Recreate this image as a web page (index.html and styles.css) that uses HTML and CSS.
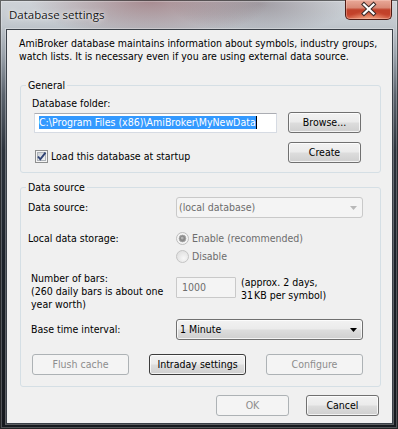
FILE: index.html
```html
<!DOCTYPE html>
<html>
<head>
<meta charset="utf-8">
<title>Database settings</title>
<link rel="stylesheet" href="styles.css">
</head>
<body>
<div class="window">
  <div class="titlebar">
    <span class="title">Database settings</span>
    <div class="close">
      <svg width="47" height="20" viewBox="0 0 47 20">
        <path d="M19 5.5 L28.5 14.5 M28.5 5.5 L19 14.5" stroke="#3a2a28" stroke-width="4.2" stroke-linecap="square" fill="none"/>
        <path d="M19 5.5 L28.5 14.5 M28.5 5.5 L19 14.5" stroke="#ffffff" stroke-width="2.2" stroke-linecap="square" fill="none"/>
      </svg>
    </div>
  </div>
  <div class="client">
    <p class="intro">AmiBroker database maintains information about symbols, industry groups,<br>watch lists. It is necessary even if you are using external data source.</p>

    <fieldset class="group general">
      <legend>General</legend>
      <div class="gen-grid">
        <span class="folder-label">Database folder:</span>
        <div class="edit folder"><span class="sel">C:\Program Files (x86)\AmiBroker\MyNewData</span><span class="caret"></span></div>
        <button class="btn">Browse...</button>
        <label class="check">
          <svg class="box" width="13" height="13" viewBox="0 0 13 13">
            <defs>
              <linearGradient id="cbg" x1="0" y1="0" x2="1" y2="1">
                <stop offset="0" stop-color="#cbcfd5"/>
                <stop offset="1" stop-color="#f6f6f6"/>
              </linearGradient>
            </defs>
            <rect x="0.5" y="0.5" width="12" height="12" fill="#f4f4f4" stroke="#8e8f8f"/>
            <rect x="2.5" y="2.5" width="8" height="8" fill="url(#cbg)" stroke="#aeb3b9" stroke-width="1"/>
            <path d="M3 6.5 L5.3 9.3 L10.5 2.6" stroke="#2f4375" stroke-width="1.9" fill="none"/>
          </svg>
          <span>Load this database at startup</span>
        </label>
        <button class="btn create">Create</button>
      </div>
    </fieldset>

    <fieldset class="group source">
      <legend>Data source</legend>
      <div class="row row1">
        <span class="lbl">Data source:</span>
        <div class="combo disabled">
          <span>(local database)</span>
          <svg width="7" height="4" viewBox="0 0 7 4"><path d="M0 0 H7 L3.5 4 Z" fill="#b8b8b8"/></svg>
        </div>
      </div>
      <div class="row row2">
        <span class="lbl">Local data storage:</span>
        <div class="radios">
          <label class="radio">
            <svg width="13" height="13" viewBox="0 0 13 13">
              <circle cx="6.5" cy="6.5" r="6" fill="#f4f4f4" stroke="#bdbdbd"/>
              <circle cx="6.5" cy="6.5" r="3.4" fill="#8a8a8a" stroke="#a6a6a6" stroke-width="0.8"/>
              <circle cx="6.2" cy="6.1" r="1.4" fill="#b4b4b4"/>
            </svg>
            <span>Enable (recommended)</span>
          </label>
          <label class="radio">
            <svg width="13" height="13" viewBox="0 0 13 13">
              <defs>
                <radialGradient id="rg" cx="0.6" cy="0.65" r="0.7">
                  <stop offset="0" stop-color="#f7f7f7"/>
                  <stop offset="1" stop-color="#dedede"/>
                </radialGradient>
              </defs>
              <circle cx="6.5" cy="6.5" r="6" fill="url(#rg)" stroke="#c4c4c4"/>
            </svg>
            <span>Disable</span>
          </label>
        </div>
      </div>
      <div class="row row3">
        <span class="lbl indent">Number of bars:<br>(260 daily bars is about one<br>year worth)</span>
        <div class="bars">
          <div class="edit num">1000</div>
          <span class="note">(approx. 2 days,<br>31&#8202;KB per symbol)</span>
        </div>
      </div>
      <div class="row row4">
        <span class="lbl indent">Base time interval:</span>
        <div class="combo">
          <span>1 Minute</span>
          <svg width="7" height="4" viewBox="0 0 7 4"><path d="M0 0 H7 L3.5 4 Z" fill="#000"/></svg>
        </div>
      </div>
      <div class="btnrow">
        <button class="btn wide" disabled>Flush cache</button>
        <button class="btn wide focus">Intraday settings</button>
        <button class="btn wide" disabled>Configure</button>
      </div>
    </fieldset>

    <div class="footer">
      <button class="btn" disabled>OK</button>
      <button class="btn">Cancel</button>
    </div>
  </div>
</div>
</body>
</html>
```

FILE: styles.css
```css
* { box-sizing: border-box; }

body {
  margin: 0;
  width: 398px;
  height: 429px;
  overflow: hidden;
  background: #1b2027;
  font-family: "DejaVu Sans Condensed", "DejaVu Sans", "Liberation Sans", sans-serif;
  font-stretch: condensed;
  font-size: 10.5px;
  line-height: 13px;
  color: #000;
}

.window {
  position: relative;
  height: 429px;
  background:
    radial-gradient(ellipse 120px 40px at 150px 0px, rgba(120, 50, 55, 0.45), rgba(120, 50, 55, 0) 100%),
    radial-gradient(ellipse 90px 30px at 260px 4px, rgba(80, 60, 70, 0.35), rgba(80, 60, 70, 0) 100%),
    linear-gradient(180deg, #cfd3d8 0px, #c2c8ce 24px, #9aa2ab 55px, #5b636d 95px, #2c333c 150px, #1c222a 260px, #16191e 429px);
  box-shadow: inset 0 0 0 1px rgba(0, 0, 0, 0.55), inset 0 0 0 2px rgba(255, 255, 255, 0.25);
}

.titlebar {
  height: 29px;
  padding: 7px 0 0 9px;
}

.title {
  font-family: "Open Sans", "Noto Sans", sans-serif;
  font-stretch: normal;
  font-size: 11.5px;
  line-height: 16px;
  color: #141414;
  text-shadow: 0 0 6px rgba(255, 255, 255, 0.95), 0 0 2px rgba(255, 255, 255, 0.9);
}

.close {
  position: absolute;
  top: 0;
  right: 6px;
  width: 47px;
  height: 20px;
  border: 1px solid #4f1b14;
  border-top: none;
  border-radius: 0 0 5px 5px;
  background:
    radial-gradient(ellipse 20px 8px at 50% 100%, rgba(255, 190, 150, 0.7), rgba(255, 190, 150, 0) 100%),
    linear-gradient(180deg, #e9a999 0%, #d98a77 40%, #c0412a 52%, #c3412a 75%, #d8684f 100%);
  box-shadow: inset 0 0 0 1px rgba(255, 220, 210, 0.35);
}

.close svg { display: block; margin: -1px 0 0 -1px; }

.client {
  margin: 0 5px 0 6px;
  height: 395px;
  background: #f0f0f0;
  border: 1px solid #3a4048;
  box-shadow: 0 0 0 1px rgba(255, 255, 255, 0.3);
  padding: 7px 11px 0 13px;
}

.intro {
  margin: 0 0 0 -1px;
  white-space: nowrap;
}

.group {
  margin: 16px 0 0;
  padding: 5px 17px 9px 7px;
  border: 1px solid #d5dfe5;
  border-radius: 3px;
  min-width: 0;
}

.group legend {
  padding: 0 2px;
  margin-left: -2px;
  line-height: 13px;
}

.gen-grid {
  display: grid;
  grid-template-columns: 243px 73px;
  column-gap: 11px;
  margin-left: 6px;
}

.folder-label {
  grid-column: 1 / -1;
  margin: 0 0 2px -2px;
}

.edit {
  height: 20px;
  background: #fff;
  border: 1px solid #d6dbe3;
  border-top-color: #abadb3;
  border-radius: 1px;
  white-space: nowrap;
}

.edit.folder {
  margin-top: 1px;
  padding: 2px 0 0 4px;
  display: flex;
  align-items: flex-start;
}

.sel {
  display: block;
  background: #3399ff;
  color: #fff;
  height: 13px;
}

.caret {
  display: block;
  width: 1px;
  height: 13px;
  background: #000;
}

.btn {
  height: 21px;
  padding: 0;
  font: inherit;
  line-height: 13px;
  color: #000;
  border: 1px solid #707070;
  border-radius: 3px;
  background: linear-gradient(180deg, #f2f2f2 0%, #ebebeb 48%, #dddddd 52%, #cfcfcf 100%);
  box-shadow: inset 0 0 0 1px rgba(255, 255, 255, 0.75);
}

.btn:disabled {
  color: #8d8d8d;
  border-color: #adb2b5;
  background: #f4f4f4;
  box-shadow: none;
}

.btn.focus {
  border-color: #3c3c3c;
}

.create { margin-top: 9px; }

.check {
  align-self: end;
  display: flex;
  align-items: center;
  gap: 3px;
  height: 13px;
  margin-left: 1px;
  white-space: nowrap;
}

.check .box { flex: none; display: block; }

.source {
  margin-top: 8px;
  padding: 3px 17px 11px 7px;
}

.row { display: flex; }

.lbl {
  width: 148px;
  flex: none;
}

.lbl.indent { padding-left: 3px; }

.row1 { align-items: center; }
.row2 { margin-top: 14px; }
.row3 { margin-top: 9px; }
.row4 { margin-top: 8px; align-items: center; }

.combo {
  width: 187px;
  height: 21px;
  display: flex;
  align-items: center;
  justify-content: space-between;
  padding: 0 5px 0 3px;
  border: 1px solid #707070;
  border-radius: 3px;
  background: linear-gradient(180deg, #f2f2f2 0%, #ebebeb 48%, #dddddd 52%, #cfcfcf 100%);
  box-shadow: inset 0 0 0 1px rgba(255, 255, 255, 0.75);
}

.combo svg { display: block; }

.combo.disabled {
  color: #6d6d6d;
  border-color: #c9c9c9;
  background: #f4f4f4;
  box-shadow: none;
  padding-left: 2px;
}

.radios {
  display: flex;
  flex-direction: column;
  gap: 5px;
}

.radio {
  display: flex;
  align-items: center;
  gap: 3px;
  height: 13px;
  color: #6d6d6d;
}

.radio svg { display: block; flex: none; }

.bars {
  display: flex;
  gap: 5px;
}

.edit.num {
  width: 60px;
  height: 21px;
  margin-top: 5px;
  padding: 3px 0 0 5px;
  color: #6d6d6d;
  background: #f4f4f4;
  border-color: #c9c9c9;
}

.note {
  padding-top: 4px;
  white-space: nowrap;
}

.btnrow {
  margin: 14px 0 0 4px;
  display: flex;
  justify-content: space-between;
}

.btn.wide { width: 97px; }

.footer {
  margin: 8px 2px 0 0;
  display: flex;
  justify-content: flex-end;
  gap: 17px;
}

.footer .btn { width: 73px; }
```
